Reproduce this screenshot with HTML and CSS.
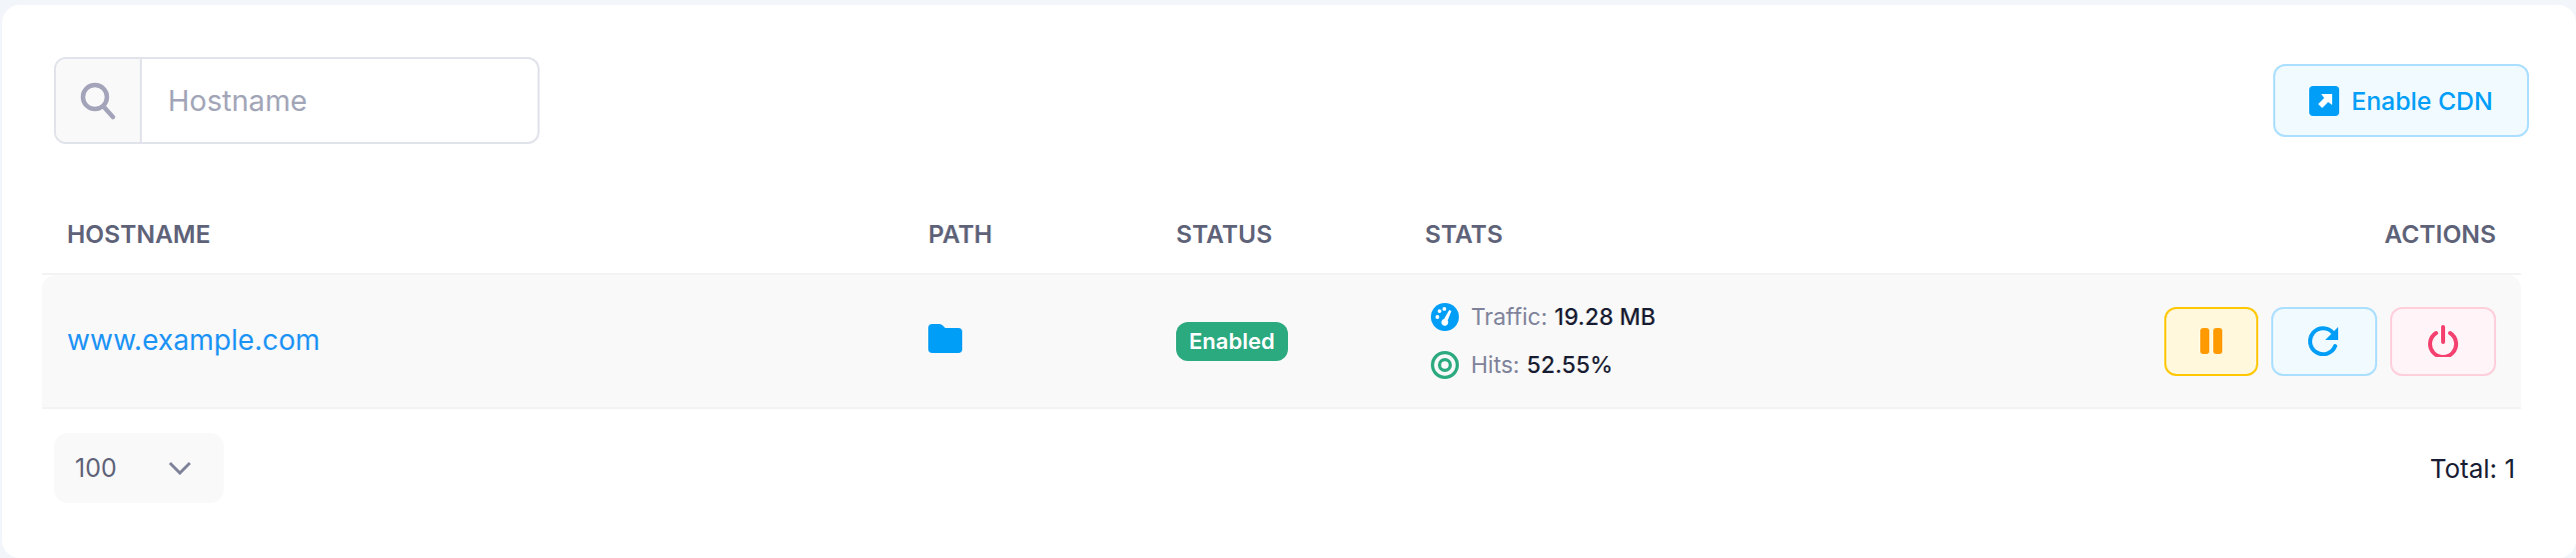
FILE: index.html
```html
<!DOCTYPE html>
<html lang="en">
<head>
<meta charset="utf-8">
<title>CDN</title>
<link rel="stylesheet" href="styles.css">
</head>
<body>
<main class="card">
  <div class="toolbar">
    <div class="search">
      <span class="search-icon">
        <svg width="36" height="38" viewBox="0 0 36 38" fill="none" stroke="#a3a3ba" stroke-width="4.5" stroke-linecap="round"><circle cx="15" cy="15" r="12"/><path d="M24 25l9 10"/></svg>
      </span>
      <span class="search-placeholder">Hostname</span>
    </div>
    <button class="btn-enable">
      <svg width="30" height="30" viewBox="0 0 30 30"><rect width="30" height="30" rx="4" fill="#009ef7"/><path d="M12 8h11v11l-4-3-6 6-4-4 6-6z" fill="#fff"/></svg>
      <span>Enable CDN</span>
    </button>
  </div>
  <div class="table">
    <div class="row head">
      <div>HOSTNAME</div><div>PATH</div><div>STATUS</div><div>STATS</div><div class="right">ACTIONS</div>
    </div>
    <div class="row body">
      <div class="host">www.example.com</div>
      <div class="path"><svg width="34" height="29" viewBox="0 0 34 29"><path d="M0 4a4 4 0 0 1 4-4h7c2 0 3 1 4 2l2 2h13a4 4 0 0 1 4 4v17a4 4 0 0 1-4 4H4a4 4 0 0 1-4-4z" fill="#009ef7"/></svg></div>
      <div><span class="badge">Enabled</span></div>
      <div class="stats">
        <div class="stat">
          <svg width="28" height="28" viewBox="0 0 26 26"><circle cx="13" cy="13" r="13" fill="#009ef7"/><g fill="#fff"><circle cx="6" cy="13" r="1.8"/><circle cx="8" cy="7.5" r="1.8"/><circle cx="12.5" cy="5.5" r="1.8"/><path d="M17 6.5l2 1-3.4 8.7a3.2 3.2 0 1 1-3.4-1.4z"/></g></svg>
          <span class="label">Traffic:</span> <b>19.28 MB</b>
        </div>
        <div class="stat">
          <svg width="28" height="28" viewBox="0 0 26 26" fill="none" stroke="#2ba97f"><circle cx="13" cy="13" r="11.5" stroke-width="3"/><circle cx="13" cy="13" r="5" stroke-width="3"/></svg>
          <span class="label">Hits:</span> <b>52.55%</b>
        </div>
      </div>
      <div class="actions">
        <button class="act pause"><svg width="22" height="26" viewBox="0 0 22 26" fill="#ff9a00"><rect width="9" height="26" rx="3"/><rect x="13" width="9" height="26" rx="3"/></svg></button>
        <button class="act reload"><svg width="32" height="30" viewBox="0 0 32 30" fill="none"><path d="M27 19a13 13 0 1 1-2-13" stroke="#009ef7" stroke-width="4" transform="translate(0 1)" stroke-linecap="round"/><path d="M30 1v13H17z" fill="#009ef7"/></svg></button>
        <button class="act power"><svg width="32" height="32" viewBox="0 0 32 32" fill="none" stroke="#f4416f" stroke-width="4" stroke-linecap="round"><path d="M16 2v15"/><path d="M9 8a13 13 0 1 0 14 0"/></svg></button>
      </div>
    </div>
  </div>
  <div class="footer">
    <div class="select"><span>100</span><svg width="22" height="14" viewBox="0 0 22 14" fill="none" stroke="#7e8299" stroke-width="3"><path d="M1 2l10 10L21 2"/></svg></div>
    <div class="total">Total: 1</div>
  </div>
</main>
</body>
</html>
```
FILE: styles.css
```css
* { box-sizing: border-box; }
html, body { margin: 0; height: 100%; }
body {
  background: #f2f6fa;
  font-family: Inter, "Liberation Sans", sans-serif;
  padding: 5px 0 0 2px;
  height: 558px;
  overflow: hidden;
}
.card {
  background: #fff;
  border-radius: 18px;
  height: 553px;
  padding: 52px 55px 0 40px;
}
.toolbar {
  display: flex;
  justify-content: space-between;
  align-items: center;
  padding: 0 0 0 12px;
  height: 87px;
}
.search {
  width: 486px;
  height: 87px;
  display: flex;
  border: 2px solid #e1e3ea;
  border-radius: 12px;
  overflow: hidden;
}
.search-icon {
  width: 86px;
  display: flex;
  align-items: center;
  justify-content: center;
  background: #f9f9f9;
  border-right: 2px solid #e1e3ea;
}
.search-placeholder {
  padding-left: 26px;
  align-self: center;
  color: #a1a5b7;
  font-size: 29px;
}
.btn-enable {
  width: 256px;
  height: 73px;
  margin-right: -8px;
  display: flex;
  align-items: center;
  justify-content: center;
  gap: 12px;
  background: #f1faff;
  border: 2px solid #abdfff;
  border-radius: 12px;
  color: #009ef7;
  font: 500 24.8px Inter, sans-serif;
}
.table { margin-top: 56px; }
.row {
  display: grid;
  grid-template-columns: 862px 248px 249px 1fr 1fr;
  align-items: center;
  padding: 0 25px;
}
.head {
  height: 75px;
  padding-bottom: 5px;
  border-bottom: 2px solid #f3f3f3;
  font-size: 24.6px;
  font-weight: 600;
  color: #5e6278;
}
.right { text-align: right; }
.body {
  height: 134px;
  background: #f9f9f9;
  border-bottom: 2px solid #f3f3f3;
  border-radius: 14px 14px 0 0;
  grid-template-columns: 862px 248px 249px 1fr auto;
}
.host { color: #1b93f5; font-size: 28.2px; font-weight: 400; margin-top: -2px; }
.path svg { display: block; margin-top: -5px; }
.badge {
  display: inline-block;
  background: #2ba97f;
  color: #fff;
  font-size: 22px;
  font-weight: 600;
  line-height: 39px;
  padding: 0 13px;
  border-radius: 12px;
}
.stats { display: flex; flex-direction: column; gap: 21px; margin-left: 6px; }
.stat { display: flex; align-items: center; gap: 7px; font-size: 23px; height: 27px; }
.stat svg { margin-right: 5px; }
.label { color: #7e8299; }
.stat b { font-weight: 500; color: #181c32; }
.actions { display: flex; gap: 13px; }
.act {
  width: 106px;
  height: 69px;
  padding: 0;
  display: flex;
  align-items: center;
  justify-content: center;
  border-radius: 12px;
  border: 2px solid;
}
.pause { width: 94px; background: #fff8dd; border-color: #ffc700; }
.reload { background: #f1faff; border-color: #abdfff; }
.power { background: #fff5f8; border-color: #ffcfdc; }
.footer {
  display: flex;
  justify-content: space-between;
  align-items: center;
  padding: 24px 6px 0 12px;
}
.select {
  width: 170px;
  height: 70px;
  display: flex;
  align-items: center;
  justify-content: space-between;
  padding: 0 33px 0 21px;
  background: #f9f9f9;
  border-radius: 14px;
  color: #5e6278;
  font-size: 25px;
}
.total { font-size: 26px; color: #181c32; }
```
